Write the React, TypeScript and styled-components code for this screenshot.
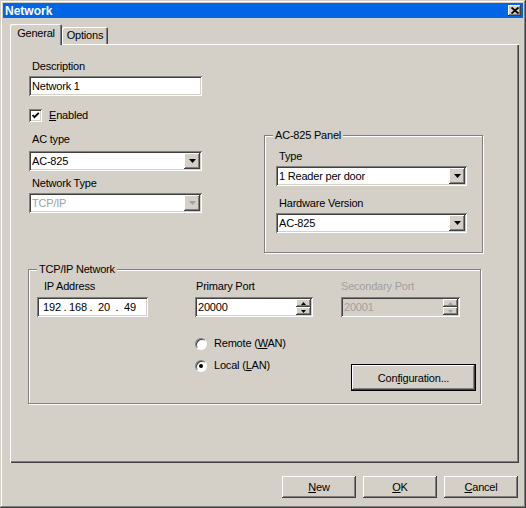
import React from 'react';
import styled, { createGlobalStyle } from 'styled-components';

const GlobalStyle = createGlobalStyle`
  html, body {
    margin: 0;
    padding: 0;
    background: #d4d0c8;
  }
  body {
    font-family: 'Liberation Sans', Arial, sans-serif;
    font-size: 11px;
    color: #000;
  }
`;

const raised = `
  box-shadow: inset -1px -1px #404040, inset 1px 1px #fff,
    inset -2px -2px #808080, inset 2px 2px #d4d0c8;
`;

const sunken = `
  box-shadow: inset 1px 1px #808080, inset -1px -1px #fff,
    inset 2px 2px #404040, inset -2px -2px #d4d0c8;
`;

const Window = styled.div`
  width: 526px;
  height: 508px;
  box-sizing: border-box;
  padding: 3px;
  background: #d4d0c8;
  box-shadow: inset -1px -1px #404040, inset 1px 1px #d4d0c8,
    inset -2px -2px #808080, inset 2px 2px #fff;
  display: flex;
  flex-direction: column;
  font-family: 'Liberation Sans', Arial, sans-serif;
  font-size: 11px;
  letter-spacing: -0.2px;
`;

const TitleBar = styled.div`
  height: 15px;
  background: #0066e6;
  display: flex;
  align-items: center;
  justify-content: space-between;
  padding: 0 2px 0 2px;
`;

const Title = styled.span`
  color: #fff;
  font-weight: bold;
  font-size: 12px;
  letter-spacing: 0;
`;

const CloseButton = styled.div`
  width: 13px;
  height: 11px;
  background: #d4d0c8;
  display: flex;
  align-items: center;
  justify-content: center;
  ${raised}
`;

const Body = styled.div`
  flex: 1;
  display: flex;
  flex-direction: column;
  padding: 0 3px 0 7px;
`;

const TabStrip = styled.div`
  height: 26px;
  display: flex;
  align-items: flex-end;
  position: relative;
  z-index: 1;
`;

const Tab = styled.div<{ $active?: boolean; $w: number }>`
  width: ${p => p.$w}px;
  height: ${p => (p.$active ? 21 : 17)}px;
  margin-bottom: ${p => (p.$active ? -1 : 0)}px;
  box-sizing: border-box;
  background: #d4d0c8;
  border-radius: 2px 2px 0 0;
  box-shadow: inset 1px 1px #fff, inset -1px 0 #404040, inset -2px 0 #808080;
  display: flex;
  justify-content: center;
  padding-top: ${p => (p.$active ? 3 : 2)}px;
  line-height: 13px;
`;

const Panel = styled.div`
  width: 509px;
  height: 419px;
  box-sizing: border-box;
  background: #d4d0c8;
  box-shadow: inset 1px 1px #fff, inset -1px -1px #404040, inset -2px -2px #808080;
  padding: 16px 0 0 19px;
  display: flex;
  flex-direction: column;
`;

const TopRow = styled.div`
  display: flex;
  align-items: flex-start;
`;

const LeftCol = styled.div`
  width: 173px;
  display: flex;
  flex-direction: column;
`;

const Field = styled.div<{ $mt?: number; $gap?: number }>`
  display: flex;
  flex-direction: column;
  gap: ${p => p.$gap ?? 3}px;
  margin-top: ${p => p.$mt ?? 0}px;
`;

const Label = styled.span<{ $indent?: number; $disabled?: boolean }>`
  display: block;
  height: 13px;
  line-height: 13px;
  padding-left: ${p => p.$indent ?? 3}px;
  color: ${p => (p.$disabled ? '#a0a0a0' : '#000')};
  white-space: nowrap;
`;

const TextBox = styled.div<{ $w?: number }>`
  width: ${p => (p.$w ? `${p.$w}px` : '100%')};
  height: 20px;
  box-sizing: border-box;
  background: #fff;
  padding: 0 3px;
  line-height: 20px;
  ${sunken}
`;

const Combo = styled.div<{ $disabled?: boolean }>`
  height: 20px;
  box-sizing: border-box;
  padding: 2px;
  background: #fff;
  display: flex;
  align-items: stretch;
  color: ${p => (p.$disabled ? '#a0a0a0' : '#000')};
  ${sunken}
`;

const ComboText = styled.span`
  flex: 1;
  line-height: 16px;
  padding-left: 1px;
`;

const DropButton = styled.div`
  width: 16px;
  background: #d4d0c8;
  display: flex;
  align-items: center;
  justify-content: center;
  ${raised}
`;

const CheckRow = styled.div<{ $mt?: number }>`
  display: flex;
  align-items: center;
  height: 13px;
  margin-top: ${p => p.$mt ?? 0}px;
`;

const CheckBox = styled.div`
  width: 13px;
  height: 13px;
  box-sizing: border-box;
  background: #fff;
  display: flex;
  align-items: center;
  justify-content: center;
  ${sunken}
`;

const ControlText = styled.span`
  margin-left: 7px;
  line-height: 13px;
  white-space: nowrap;
`;

const GroupBox = styled.fieldset<{ $w: number; $mt: number; $ml: number }>`
  width: ${p => p.$w}px;
  box-sizing: border-box;
  margin: ${p => p.$mt}px 0 0 ${p => p.$ml}px;
  border: 1px solid #808080;
  box-shadow: inset 1px 1px #fff, 1px 1px #fff;
  min-width: 0;
`;

const Legend = styled.legend`
  padding: 0 2px;
  line-height: 13px;
  background: #d4d0c8;
  position: relative;
  z-index: 1;
`;

const PanelGroup = styled(GroupBox)`
  padding: 8px 15px 19px 8px;
`;

const GroupInner = styled.div`
  margin-left: 3px;
  display: flex;
  flex-direction: column;
`;

const NetGroup = styled(GroupBox)`
  padding: 4px 0 12px 8px;
`;

const NetGrid = styled.div`
  display: grid;
  grid-template-columns: 158px 146px 1fr;
  align-items: start;
`;

const IpBox = styled.div`
  width: 111px;
  height: 20px;
  box-sizing: border-box;
  background: #fff;
  padding-left: 4px;
  display: flex;
  align-items: center;
  ${sunken}
`;

const Octet = styled.span`
  width: 22px;
  text-align: center;
`;

const Dot = styled.span`
  width: 4px;
  text-align: center;
`;

const SpinBox = styled.div<{ $w: number; $disabled?: boolean }>`
  width: ${p => p.$w}px;
  height: 20px;
  box-sizing: border-box;
  padding: 2px;
  display: flex;
  background: ${p => (p.$disabled ? '#d4d0c8' : '#fff')};
  color: ${p => (p.$disabled ? '#a0a0a0' : '#000')};
  ${sunken}
`;

const SpinText = styled.span`
  flex: 1;
  line-height: 16px;
  padding-left: 1px;
`;

const SpinCol = styled.div`
  width: 15px;
  display: flex;
  flex-direction: column;
`;

const SpinBtn = styled.div`
  flex: 1;
  background: #d4d0c8;
  display: flex;
  align-items: center;
  justify-content: center;
  ${raised}
`;

const RadioList = styled.div`
  margin-top: 20px;
  display: flex;
  flex-direction: column;
  gap: 9px;
`;

const RadioCircle = styled.div`
  width: 12px;
  height: 12px;
  box-sizing: border-box;
  border-radius: 50%;
  background: #fff;
  border: 1px solid;
  border-color: #808080 #fff #fff #808080;
  box-shadow: inset 1px 1px #404040;
  display: flex;
  align-items: center;
  justify-content: center;
`;

const RadioDot = styled.div`
  width: 4px;
  height: 4px;
  border-radius: 50%;
  background: #000;
`;

const Button = styled.div<{ $w: number; $h: number; $default?: boolean }>`
  width: ${p => p.$w}px;
  height: ${p => p.$h}px;
  box-sizing: border-box;
  background: #d4d0c8;
  display: flex;
  align-items: center;
  justify-content: center;
  ${p =>
    p.$default
      ? `box-shadow: inset 0 0 0 1px #000, inset -2px -2px #404040, inset 2px 2px #fff, inset -3px -3px #808080;`
      : raised}
`;

const ConfigButton = styled(Button)`
  margin: 47px 0 0 10px;
`;

const BottomBar = styled.div`
  display: flex;
  justify-content: flex-end;
  gap: 7px;
  margin-top: 13px;
  padding-right: 2px;
`;

const Arrow = ({ color = '#000' }: { color?: string }) => (
  <svg width="7" height="4" viewBox="0 0 7 4">
    <polygon points="0,0 7,0 3.5,4" fill={color} />
  </svg>
);

const SpinArrow = ({ up, color = '#000' }: { up?: boolean; color?: string }) => (
  <svg width="5" height="3" viewBox="0 0 5 3">
    <polygon points={up ? '0,3 5,3 2.5,0' : '0,0 5,0 2.5,3'} fill={color} />
  </svg>
);

const Select = ({ value, disabled }: { value: string; disabled?: boolean }) => (
  <Combo $disabled={disabled}>
    <ComboText>{value}</ComboText>
    <DropButton>
      <Arrow color={disabled ? '#a0a0a0' : '#000'} />
    </DropButton>
  </Combo>
);

const Spinner = ({ value, w, disabled }: { value: string; w: number; disabled?: boolean }) => {
  const c = disabled ? '#a0a0a0' : '#000';
  return (
    <SpinBox $w={w} $disabled={disabled}>
      <SpinText>{value}</SpinText>
      <SpinCol>
        <SpinBtn>
          <SpinArrow up color={c} />
        </SpinBtn>
        <SpinBtn>
          <SpinArrow color={c} />
        </SpinBtn>
      </SpinCol>
    </SpinBox>
  );
};

const Radio = ({ checked, children }: { checked?: boolean; children: React.ReactNode }) => (
  <CheckRow>
    <RadioCircle>{checked && <RadioDot />}</RadioCircle>
    <ControlText>{children}</ControlText>
  </CheckRow>
);

const App = () => {
  return (
    <>
      <GlobalStyle />
      <Window>
        <TitleBar>
          <Title>Network</Title>
          <CloseButton>
            <svg width="8" height="7" viewBox="0 0 8 7">
              <path d="M0.5 0.5 L7.5 6.5 M7.5 0.5 L0.5 6.5" stroke="#000" strokeWidth="1.8" />
            </svg>
          </CloseButton>
        </TitleBar>
        <Body>
          <TabStrip>
            <Tab $active $w={52}>General</Tab>
            <Tab $w={46}>Options</Tab>
          </TabStrip>
          <Panel>
            <TopRow>
              <LeftCol>
                <Field>
                  <Label>Description</Label>
                  <TextBox>Network 1</TextBox>
                </Field>
                <CheckRow $mt={13}>
                  <CheckBox>
                    <svg width="9" height="9" viewBox="0 0 9 9">
                      <path d="M1.5 4 L3.5 6.2 L7.8 1.8" stroke="#000" strokeWidth="1.8" fill="none" />
                    </svg>
                  </CheckBox>
                  <ControlText>
                    <u>E</u>nabled
                  </ControlText>
                </CheckRow>
                <Field $mt={11} $gap={5}>
                  <Label>AC type</Label>
                  <Select value="AC-825" />
                </Field>
                <Field $mt={6}>
                  <Label>Network Type</Label>
                  <Select value="TCP/IP" disabled />
                </Field>
              </LeftCol>
              <PanelGroup $w={219} $mt={69} $ml={62}>
                <Legend>AC-825 Panel</Legend>
                <GroupInner>
                  <Field>
                    <Label>Type</Label>
                    <Select value="1 Reader per door" />
                  </Field>
                  <Field $mt={11}>
                    <Label>Hardware Version</Label>
                    <Select value="AC-825" />
                  </Field>
                </GroupInner>
              </PanelGroup>
            </TopRow>
            <NetGroup $w={453} $mt={10} $ml={-1}>
              <Legend>TCP/IP Network</Legend>
              <NetGrid>
                <Field $gap={4}>
                  <Label $indent={7}>IP Address</Label>
                  <IpBox>
                    <Octet>192</Octet>
                    <Dot>.</Dot>
                    <Octet>168</Octet>
                    <Dot>.</Dot>
                    <Octet>20</Octet>
                    <Dot>.</Dot>
                    <Octet>49</Octet>
                  </IpBox>
                </Field>
                <Field $gap={4}>
                  <Label $indent={1}>Primary Port</Label>
                  <Spinner value="20000" w={118} />
                </Field>
                <Field $gap={4}>
                  <Label $indent={0} $disabled>
                    Secondary Port
                  </Label>
                  <Spinner value="20001" w={119} disabled />
                </Field>
                <div />
                <RadioList>
                  <Radio>
                    Remote (<u>W</u>AN)
                  </Radio>
                  <Radio checked>
                    Local (<u>L</u>AN)
                  </Radio>
                </RadioList>
                <ConfigButton $w={125} $h={27} $default>
                  <span>
                    Con<u>f</u>iguration...
                  </span>
                </ConfigButton>
              </NetGrid>
            </NetGroup>
          </Panel>
          <BottomBar>
            <Button $w={74} $h={22}>
              <span>
                <u>N</u>ew
              </span>
            </Button>
            <Button $w={74} $h={22}>
              <span>
                <u>O</u>K
              </span>
            </Button>
            <Button $w={74} $h={22}>
              <span>
                <u>C</u>ancel
              </span>
            </Button>
          </BottomBar>
        </Body>
      </Window>
    </>
  );
};

export default App;
